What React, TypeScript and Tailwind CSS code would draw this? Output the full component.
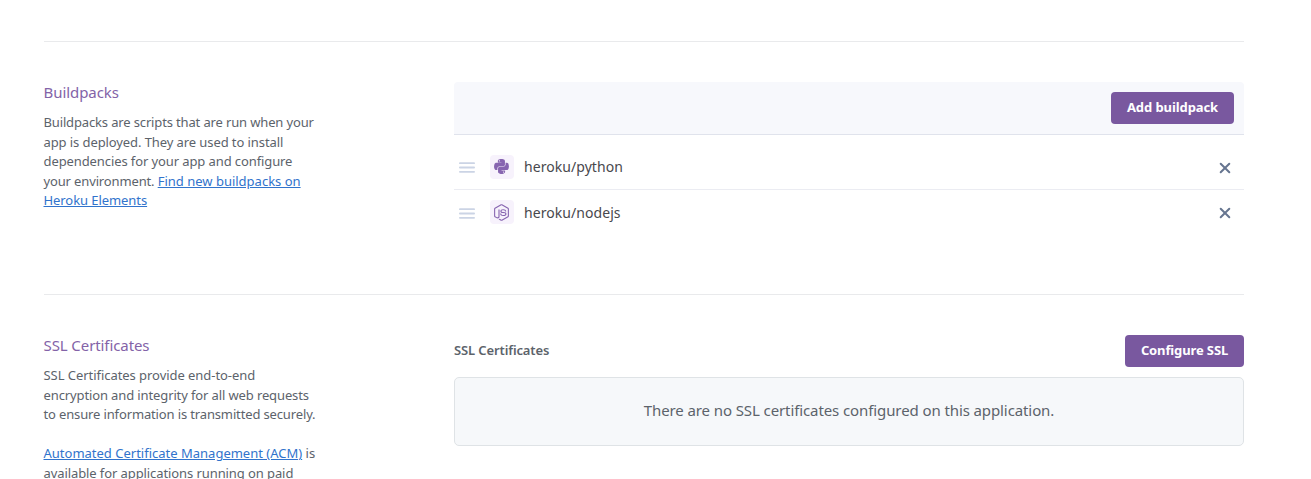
import { FaPython, FaNodeJs } from "react-icons/fa";
import type { ReactNode } from "react";

const Line = ({ children, className = "" }: { children: ReactNode; className?: string }) => (
  <span className={"block whitespace-nowrap " + className}>{children}</span>
);

const Handle = () => (
  <svg className="ml-[5px] mt-px h-[11px] w-4 shrink-0" viewBox="0 0 16 11" fill="none" stroke="#cbd4e5" strokeWidth="1.8" strokeLinecap="round">
    <path d="M.9 1.2h14.2M.9 5.5h14.2M.9 9.8h14.2" />
  </svg>
);

const Remove = () => (
  <svg className="mr-[13px] mt-px h-3 w-3" viewBox="0 0 12 12" fill="none" stroke="#667590" strokeWidth="2" strokeLinecap="round">
    <path d="M1.7 1.7l8.6 8.6M10.3 1.7l-8.6 8.6" />
  </svg>
);

const Row = ({ icon, name, className }: { icon: ReactNode; name: string; className: string }) => (
  <li className={"flex items-center " + className}>
    <Handle />
    <span className="-mt-px ml-[15px] flex h-6 w-6 items-center justify-center rounded bg-[#f7f2fc] pr-px text-[#8765b0]">{icon}</span>
    <span className="-mt-px ml-[10px] flex-1 text-[14px] tracking-[0.06px] text-[#48484d]">{name}</span>
    <Remove />
  </li>
);

const Button = ({ children, className }: { children: ReactNode; className: string }) => (
  <button className={"flex h-8 items-center justify-center whitespace-nowrap rounded-[4px] bg-[#79589f] text-[13px] font-bold text-white " + className}>
    {children}
  </button>
);

export default function App() {
  return (
    <main className="h-[479px] overflow-hidden bg-white pl-[43.5px] pr-[67px] pt-[41px] font-['Noto_Sans',sans-serif] text-[#5c636b]">
      <section className="flex h-[253px] border-t border-[#e9eaec] pt-10">
        <div className="w-[410.5px] shrink-0">
          <h2 className="-mt-px text-[15px] leading-[22px] tracking-[-0.07px] text-[#8363a8]">Buildpacks</h2>
          <p className="mt-[10px] text-[13px] leading-[19.5px]">
            <Line className="tracking-[-0.145px]">Buildpacks are scripts that are run when your</Line>
            <Line className="tracking-[-0.09px]">app is deployed. They are used to install</Line>
            <Line className="tracking-[-0.1px]">dependencies for your app and configure</Line>
            <Line><span className="tracking-[-0.14px]">your environment. </span><a className="text-[#3173cc] underline">Find new buildpacks on</a></Line>
            <Line className="tracking-[-0.07px]"><a className="text-[#3173cc] underline">Heroku Elements</a></Line>
          </p>
        </div>
        <div className="flex-1">
          <div className="flex h-[53px] items-center justify-end rounded-t border-b border-[#e0e3ec] bg-[#f7f8fc] pr-[10px]">
            <Button className="w-[123px] tracking-[-0.08px]">Add buildpack</Button>
          </div>
          <ul className="pt-[10px]">
            <Row className="h-[45px] border-b border-[#ebecf2]" icon={<FaPython size={17} />} name="heroku/python" />
            <Row className="h-[45px]" icon={<FaNodeJs size={17} />} name="heroku/nodejs" />
          </ul>
        </div>
      </section>
      <section className="flex border-t border-[#e9eaec] pt-10">
        <div className="w-[410.5px] shrink-0">
          <h2 className="-mt-px text-[15px] leading-[22px] tracking-[-0.09px] text-[#8363a8]">SSL Certificates</h2>
          <p className="mt-[10px] text-[13px] leading-[19.5px]">
            <Line className="tracking-[-0.05px]">SSL Certificates provide end-to-end</Line>
            <Line className="tracking-[-0.12px]">encryption and integrity for all web requests</Line>
            <Line className="tracking-[-0.14px]">to ensure information is transmitted securely.</Line>
          </p>
          <p className="mt-[19.5px] text-[13px] leading-[19.5px]">
            <Line><a className="text-[#3173cc] underline">Automated Certificate Management (ACM)</a> is</Line>
            <Line className="tracking-[-0.09px]">available for applications running on paid</Line>
          </p>
        </div>
        <div className="flex-1">
          <div className="flex h-8 items-center justify-between">
            <h3 className="text-[13px] font-semibold tracking-[-0.12px]">SSL Certificates</h3>
            <Button className="w-[119px] tracking-[-0.12px]">Configure SSL</Button>
          </div>
          <div className="mt-[10px] flex h-[69px] items-center justify-center rounded-[5px] border border-[#dfe3e6] bg-[#f6f8fa] pb-0.5 text-[15px] tracking-[-0.1px]">
            There are no SSL certificates configured on this application.
          </div>
        </div>
      </section>
    </main>
  );
}
